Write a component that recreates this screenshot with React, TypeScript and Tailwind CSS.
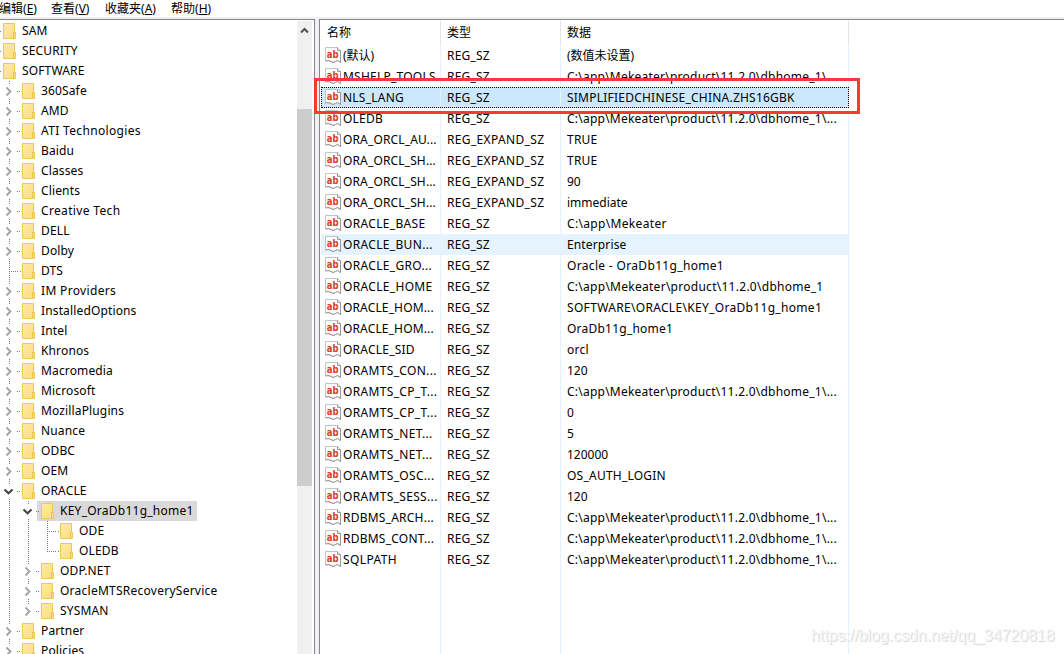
import type { ReactNode } from "react";

type Twisty = "open" | "closed" | "none";
interface TreeNode {
  name: string;
  level: number;
  twisty: Twisty;
  selected?: boolean;
  last?: boolean;
}

const closed = (name: string): TreeNode => ({ name, level: 1, twisty: "closed" });

const nodes: TreeNode[] = [
  { name: "SAM", level: 0, twisty: "none" },
  { name: "SECURITY", level: 0, twisty: "none" },
  { name: "SOFTWARE", level: 0, twisty: "open" },
  ...["360Safe", "AMD", "ATI Technologies", "Baidu", "Classes", "Clients", "Creative Tech", "DELL", "Dolby"].map(closed),
  { name: "DTS", level: 1, twisty: "none" },
  ...["IM Providers", "InstalledOptions", "Intel", "Khronos", "Macromedia", "Microsoft", "MozillaPlugins", "Nuance", "ODBC", "OEM"].map(closed),
  { name: "ORACLE", level: 1, twisty: "open" },
  { name: "KEY_OraDb11g_home1", level: 2, twisty: "open", selected: true },
  { name: "ODE", level: 3, twisty: "none" },
  { name: "OLEDB", level: 3, twisty: "none", last: true },
  { name: "ODP.NET", level: 2, twisty: "closed" },
  { name: "OracleMTSRecoveryService", level: 2, twisty: "closed" },
  { name: "SYSMAN", level: 2, twisty: "closed", last: true },
  closed("Partner"),
  closed("Policies"),
];

const home = "C:\\app\\Mekeater\\product\\11.2.0\\dbhome_1";

const NONE = "";
const SNUG = "tracking-[0.14px]";
const MEDIUM = "tracking-[0.23px]";
const LOOSE = "tracking-[0.33px]";

const values: [name: string, type: string, data: string, nameTracking: string, dataTracking: string][] = [
  ["(默认)", "REG_SZ", "(数值未设置)", NONE, NONE],
  ["MSHELP_TOOLS", "REG_SZ", home + "\\...", MEDIUM, MEDIUM],
  ["NLS_LANG", "REG_SZ", "SIMPLIFIEDCHINESE_CHINA.ZHS16GBK", MEDIUM, MEDIUM],
  ["OLEDB", "REG_SZ", home + "\\...", MEDIUM, MEDIUM],
  ["ORA_ORCL_AU...", "REG_EXPAND_SZ", "TRUE", SNUG, MEDIUM],
  ["ORA_ORCL_SH...", "REG_EXPAND_SZ", "TRUE", SNUG, MEDIUM],
  ["ORA_ORCL_SH...", "REG_EXPAND_SZ", "90", SNUG, NONE],
  ["ORA_ORCL_SH...", "REG_EXPAND_SZ", "immediate", SNUG, NONE],
  ["ORACLE_BASE", "REG_SZ", "C:\\app\\Mekeater", LOOSE, LOOSE],
  ["ORACLE_BUN...", "REG_SZ", "Enterprise", LOOSE, SNUG],
  ["ORACLE_GRO...", "REG_SZ", "Oracle - OraDb11g_home1", LOOSE, LOOSE],
  ["ORACLE_HOME", "REG_SZ", home, LOOSE, "tracking-[0.27px]"],
  ["ORACLE_HOM...", "REG_SZ", "SOFTWARE\\ORACLE\\KEY_OraDb11g_home1", SNUG, "tracking-[0.32px]"],
  ["ORACLE_HOM...", "REG_SZ", "OraDb11g_home1", SNUG, MEDIUM],
  ["ORACLE_SID", "REG_SZ", "orcl", MEDIUM, MEDIUM],
  ["ORAMTS_CON...", "REG_SZ", "120", LOOSE, NONE],
  ["ORAMTS_CP_T...", "REG_SZ", home + "\\...", LOOSE, MEDIUM],
  ["ORAMTS_CP_T...", "REG_SZ", "0", LOOSE, NONE],
  ["ORAMTS_NET...", "REG_SZ", "5", LOOSE, NONE],
  ["ORAMTS_NET...", "REG_SZ", "120000", LOOSE, NONE],
  ["ORAMTS_OSC...", "REG_SZ", "OS_AUTH_LOGIN", LOOSE, MEDIUM],
  ["ORAMTS_SESS...", "REG_SZ", "120", LOOSE, NONE],
  ["RDBMS_ARCH...", "REG_SZ", home + "\\...", MEDIUM, MEDIUM],
  ["RDBMS_CONT...", "REG_SZ", home + "\\...", MEDIUM, MEDIUM],
  ["SQLPATH", "REG_SZ", home + "\\...", "tracking-[0.4px]", MEDIUM],
];

function Folder() {
  return (
    <svg className="block shrink-0" width="13" height="16" viewBox="0 0 13 16">
      <defs>
        <linearGradient id="folder" x1="0" y1="0" x2="1" y2="1">
          <stop offset="0" stopColor="#ffeba7" />
          <stop offset="1" stopColor="#fddd7c" />
        </linearGradient>
      </defs>
      <path d="M.5 .5H11.5V9.5H12.5V15.5H.5Z" fill="url(#folder)" stroke="#edc95a" />
      <path d="M12.5 9.5H10.5V15.5" fill="none" stroke="#e8c04a" />
    </svg>
  );
}

function Chevron({ open }: { open: boolean }) {
  return (
    <svg className="block" width="11" height="11" viewBox="0 0 11 11" fill="none" strokeWidth="2">
      {open ? <path d="M1.5 3.5L5.5 7.3L9.5 3.5" stroke="#404040" /> : <path d="M3.5 1.5L7.4 5.5L3.5 9.5" stroke="#a6a6a6" />}
    </svg>
  );
}

function Guide() {
  return (
    <svg className="block h-5 w-[19px] shrink-0" viewBox="0 0 19 20">
      <path d="M9.5 0V20" stroke="#7a7a7a" strokeDasharray="1 1" />
    </svg>
  );
}

function Joint({ node }: { node: TreeNode }) {
  if (node.twisty === "none") {
    return (
      <svg className="block h-5 w-[19px] shrink-0" viewBox="0 0 19 20">
        <path d={node.last ? "M9.5 0V10M9 10.5H19" : "M9.5 0V20M9 10.5H19"} stroke="#7a7a7a" strokeDasharray="1 1" fill="none" />
      </svg>
    );
  }
  return (
    <svg className="block h-5 w-[19px] shrink-0" viewBox="0 0 19 20">
      <path d={node.last ? "M9.5 0V3" : "M9.5 0V3M9.5 18V20"} stroke="#7a7a7a" strokeDasharray="1 1" />
      <path d="M17 10.5H18" stroke="#7a7a7a" />
      <svg x="3" y="5" width="11" height="11">
        <Chevron open={node.twisty === "open"} />
      </svg>
    </svg>
  );
}

function TreeRow({ node }: { node: TreeNode }) {
  return (
    <div className="flex h-5 shrink-0 items-center">
      {node.level > 0 && (
        <>
          {node.level > 1 && <Guide />}
          {node.level > 2 && <Guide />}
          <Joint node={node} />
        </>
      )}
      <div className={node.selected ? "-ml-px flex h-5 items-center bg-[#d9d9d9] pl-px pr-[3px]" : "flex h-5 items-center"}>
        <svg className="block h-5 w-[3px] shrink-0" viewBox="0 0 3 20">
          <path d={node.level === 0 || node.twisty !== "none" ? "M0 10.5H1" : "M1 10.5H2"} stroke="#7a7a7a" />
        </svg>
        <Folder />
        <span className={node.name.includes("Tech") || node.name.includes("Providers") ? "pl-1.5 tracking-[0.34px]" : node.name.length > 16 ? "pl-1.5 tracking-[0.25px]" : "pl-1.5 tracking-[0.14px]"}>
          {node.name}
        </span>
      </div>
    </div>
  );
}

function StringIcon() {
  return (
    <svg className="block shrink-0" width="17" height="17" viewBox="0 0 17 17">
      <path d="M.5 .5H12.5L15.5 3.5V15.5L12.5 13.5L10.5 14.5L8 15.5L5 14L3 13.5L.5 14Z" fill="#fff" stroke="#c4c4c4" />
      <path d="M12.5 .5V3.5H15.5V15.5L12.5 13.5L10.5 14.5L8 15.5L5 14L3 13.5L.5 14" fill="none" stroke="#989898" />
      <text x="1.8" y="11" fontSize="10" fontWeight="700" fontFamily="DejaVu Sans, sans-serif" fill="#d2421f" textLength="11.8" lengthAdjust="spacingAndGlyphs" letterSpacing="0">
        ab
      </text>
    </svg>
  );
}

function Cell({ children, className }: { children?: ReactNode; className: string }) {
  return <div className={"flex h-full shrink-0 items-center whitespace-pre border-r " + className}>{children}</div>;
}

function MenuItem({ label, hotkey, className }: { label: string; hotkey: string; className: string }) {
  return (
    <span className={"shrink-0 whitespace-nowrap " + className}>
      {label}(<span className="underline underline-offset-1">{hotkey}</span>)
    </span>
  );
}

export default function App() {
  return (
    <div className="relative flex h-[654px] w-[1064px] flex-col overflow-hidden bg-white font-['Noto_Sans','Noto_Sans_CJK_SC',sans-serif] text-[12px] leading-5 text-black">
      <div className="flex h-[17px] shrink-0 items-center leading-[17px]">
        <MenuItem label="编辑" hotkey="E" className="-ml-px w-[52px]" />
        <MenuItem label="查看" hotkey="V" className="w-[54px]" />
        <MenuItem label="收藏夹" hotkey="A" className="w-[66px]" />
        <MenuItem label="帮助" hotkey="H" className="" />
      </div>
      <div className="flex min-h-0 flex-1 bg-[#f0f0f0] pt-0.5">
        <div className="flex w-[315px] shrink-0 border-r border-t border-[#828790] bg-white pt-px">
          <div className="flex min-w-0 flex-1 flex-col overflow-hidden whitespace-nowrap">
            {nodes.map((node) => (
              <TreeRow key={node.name + node.level} node={node} />
            ))}
          </div>
          <div className="mr-0.5 flex w-[15px] shrink-0 flex-col items-center bg-[#f0f0f0]">
            <svg className="block h-[88px] w-[15px] shrink-0" viewBox="0 0 15 88">
              <path d="M4 11.5L7.5 8L11 11.5" fill="none" stroke="#505050" strokeWidth="2.1" />
            </svg>
            <div className="h-[377px] w-full shrink-0 bg-[#cdcdcd]" />
          </div>
        </div>
        <div className="ml-1 flex min-w-0 flex-1 flex-col border-l border-t border-[#828790] bg-white pt-px">
          <div className="flex h-6 shrink-0 pl-px">
            <Cell className="w-[120px] border-[#e5e5e5] pl-1.5">名称</Cell>
            <Cell className="w-[120px] border-[#e5e5e5] pl-1.5">类型</Cell>
            <Cell className="w-[288px] border-[#e5e5e5] pl-1.5">数据</Cell>
          </div>
          {values.map(([name, type, data, nameTracking, dataTracking], i) => (
            <div key={i} className="flex h-[21px] shrink-0 pl-px">
              <div
                className={
                  i === 2
                    ? "flex h-full bg-[#cce8ff] outline-1 -outline-offset-1 outline-dotted outline-black"
                    : i === 9
                      ? "flex h-full bg-[#e5f3ff]"
                      : "flex h-full"
                }
              >
                <Cell className="w-[120px] border-[#e5f1fb] pl-1">
                  <StringIcon />
                  <span className={"pl-px " + nameTracking}>{name}</span>
                </Cell>
                <Cell className={type === "REG_SZ" ? "w-[120px] border-[#e5f1fb] pl-1.5 tracking-[0.2px]" : "w-[120px] border-[#e5f1fb] pl-1.5 tracking-[0.35px]"}>{type}</Cell>
                <Cell className={"w-[288px] border-[#e5f1fb] pl-1.5 " + dataTracking}>{data}</Cell>
              </div>
            </div>
          ))}
          <div className="flex min-h-0 flex-1 pl-px">
            <Cell className="w-[120px] border-[#e5f1fb]" />
            <Cell className="w-[120px] border-[#e5f1fb]" />
            <Cell className="w-[288px] border-[#e5f1fb]" />
          </div>
        </div>
      </div>
      <div className="absolute left-[314px] top-[78px] h-9 w-[546px] border-[3px] border-[#fb3838]" />
      <div className="absolute left-[811px] top-[626px] font-['Liberation_Sans',sans-serif] text-[16px] leading-5 tracking-[-0.06px] text-[#f6f6f6] [text-shadow:1px_1px_0_#dadada]">
        https://blog.csdn.net/qq_34720818
      </div>
    </div>
  );
}
